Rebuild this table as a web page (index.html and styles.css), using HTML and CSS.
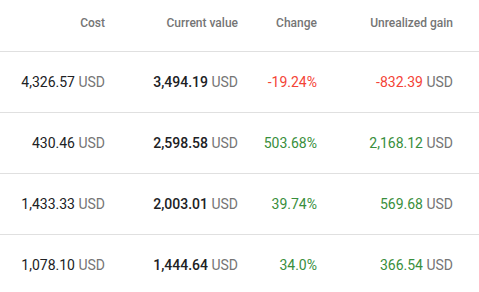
FILE: index.html
```html
<!DOCTYPE html>
<html>
<head>
<meta charset="utf-8">
<link rel="stylesheet" href="styles.css">
</head>
<body>
<div class="table">
  <div class="row head">
    <div class="cell">Cost</div>
    <div class="cell">Current value</div>
    <div class="cell">Change</div>
    <div class="cell">Unrealized gain</div>
  </div>
  <div class="row">
    <div class="cell">4,326.57 <span class="cur">USD</span></div>
    <div class="cell"><b>3,494.19</b> <span class="cur">USD</span></div>
    <div class="cell neg">-19.24%</div>
    <div class="cell"><span class="neg">-832.39</span> <span class="cur">USD</span></div>
  </div>
  <div class="row">
    <div class="cell">430.46 <span class="cur">USD</span></div>
    <div class="cell"><b>2,598.58</b> <span class="cur">USD</span></div>
    <div class="cell pos">503.68%</div>
    <div class="cell"><span class="pos">2,168.12</span> <span class="cur">USD</span></div>
  </div>
  <div class="row">
    <div class="cell">1,433.33 <span class="cur">USD</span></div>
    <div class="cell"><b>2,003.01</b> <span class="cur">USD</span></div>
    <div class="cell pos">39.74%</div>
    <div class="cell"><span class="pos">569.68</span> <span class="cur">USD</span></div>
  </div>
  <div class="row">
    <div class="cell">1,078.10 <span class="cur">USD</span></div>
    <div class="cell"><b>1,444.64</b> <span class="cur">USD</span></div>
    <div class="cell pos">34.0%</div>
    <div class="cell"><span class="pos">366.54</span> <span class="cur">USD</span></div>
  </div>
</div>
</body>
</html>
```
FILE: styles.css
```css
html, body {
  margin: 0;
  padding: 0;
  background: #fff;
}
body {
  font-family: Roboto, "Liberation Sans", sans-serif;
  color: #202124;
  width: 479px;
  height: 292px;
  overflow: hidden;
}
.row {
  display: grid;
  grid-template-columns: 105px 133px 79px 136px 26px;
  align-items: center;
  height: 60px;
  border-bottom: 1px solid #e0e0e0;
  font-size: 14px;
}
.row.head {
  height: 51px;
  align-items: start;
  font-size: 12px;
  font-weight: 500;
  color: #757575;
}
.row.head .cell {
  padding-top: 15px;
  line-height: 16px;
}
.cell {
  text-align: right;
  white-space: nowrap;
  line-height: 20px;
}
.cur {
  color: #757575;
}
b {
  font-weight: 500;
}
.neg {
  color: #f44336;
}
.pos {
  color: #388e3c;
}
```
